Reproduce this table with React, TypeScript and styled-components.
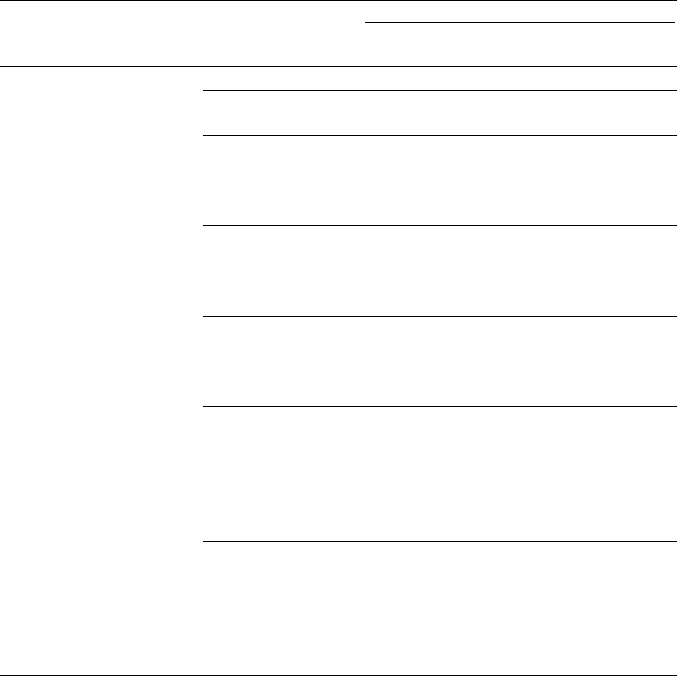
import styled, { createGlobalStyle } from "styled-components";

const GlobalStyle = createGlobalStyle`
  html, body {
    margin: 0;
    padding: 0;
    background: #fff;
  }
  body {
    font-family: "Liberation Serif", "Times New Roman", serif;
    color: #000;
  }
`;

const Table = styled.div`
  width: 677px;
  border-top: 1px solid #000;
  border-bottom: 1px solid #000;
`;

const Head = styled.div`
  display: grid;
  grid-template-columns: 203px 162px 1fr;
  grid-template-rows: 22px 43px;
  border-bottom: 1px solid #000;
`;

const GroupCell = styled.div`
  grid-column: 3;
  grid-row: 1;
  margin-right: 2px;
  border-bottom: 1px solid #000;
`;

const LabelRow = styled.div`
  grid-column: 1 / -1;
  grid-row: 2;
`;

const Body = styled.div`
  display: grid;
  grid-template-columns: 203px 1fr;
`;

const SideCell = styled.div`
  grid-column: 1;
`;

const Rows = styled.div`
  display: flex;
  flex-direction: column;
`;

const Row = styled.div<{ $h: number }>`
  height: ${(p) => p.$h}px;
  border-bottom: 1px solid #000;

  &:last-child {
    border-bottom: none;
  }
`;

const rowHeights = [23, 44, 89, 90, 89, 134, 133];

export default function App() {
  return (
    <>
      <GlobalStyle />
      <Table>
        <Head>
          <GroupCell />
          <LabelRow />
        </Head>
        <Body>
          <SideCell />
          <Rows>
            {rowHeights.map((h, i) => (
              <Row key={i} $h={h} />
            ))}
          </Rows>
        </Body>
      </Table>
    </>
  );
}
